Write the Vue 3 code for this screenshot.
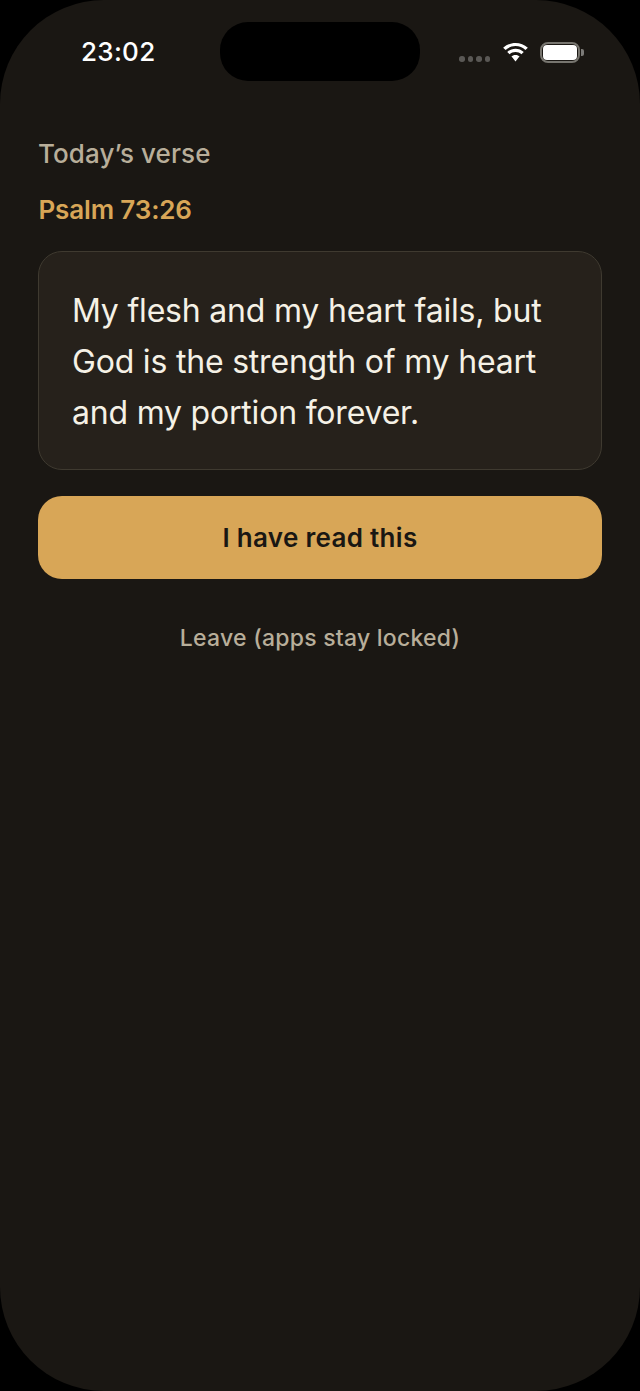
<template>
  <div class="screen">
    <div class="status">
      <span class="time">23:02</span>
      <div class="island"></div>
      <div class="indicators">
        <div class="dots">
          <i v-for="n in 4" :key="n"></i>
        </div>
        <svg class="wifi" width="27" height="19" viewBox="0 0 28 20">
          <path d="M14 3.2c4 0 7.700 1.600 10.400 4.200l2.600-2.400C23.400 1.900 18.900 0 14 0S4.600 1.900 1 5l2.600 2.400C6.300 4.800 10 3.200 14 3.200z" fill="#fff" />
          <path d="M14 9.500c2.400 0 4.600.9 6.200 2.400l2.500-2.400C20.400 7.400 17.300 6.100 14 6.100S7.600 7.400 5.300 9.500l2.500 2.400c1.600-1.500 3.800-2.400 6.200-2.400z" fill="#fff" />
          <path d="M14 12.500c-2 0-3.300.7-4.300 1.500L14 19.500l4.300-5.500c-1-.8-2.300-1.500-4.300-1.500z" fill="#fff" />
        </svg>
        <div class="battery">
          <div class="battery-body"><div class="battery-fill"></div></div>
          <div class="battery-cap"></div>
        </div>
      </div>
    </div>

    <main class="content">
      <p class="label">Today’s verse</p>
      <p class="reference">Psalm 73:26</p>
      <div class="verse-card">
        <p class="verse">My flesh and my heart fails, but God is the strength of my heart and my portion forever.</p>
      </div>
      <button class="read-btn">I have read this</button>
      <button class="leave-btn">Leave (apps stay locked)</button>
    </main>
  </div>
</template>

<script setup>
</script>

<style>
html,
body {
  margin: 0;
  background: #000;
}
</style>

<style scoped>
.screen {
  width: 640px;
  height: 1391px;
  box-sizing: border-box;
  background: #1a1713;
  border-radius: 104px;
  font-family: Inter, "Liberation Sans", sans-serif;
  overflow: hidden;
}
.status {
  height: 81px;
  padding-top: 22px;
  box-sizing: border-box;
  display: flex;
  justify-content: space-between;
  align-items: flex-start;
  padding-left: 81px;
  padding-right: 56px;
  position: relative;
}
.time {
  color: #fff;
  font-size: 26px;
  font-weight: 500;
  line-height: 32px;
  letter-spacing: 0.3px;
  margin-top: 14px;
}
.island {
  position: absolute;
  left: 220px;
  top: 22px;
  width: 200px;
  height: 59px;
  border-radius: 28px;
  background: #000;
}
.indicators {
  display: flex;
  align-items: center;
  margin-top: 20px;
}
.dots {
  display: flex;
  gap: 3px;
  margin-top: 13px;
  margin-right: 12px;
}
.dots i {
  width: 5.500px;
  height: 5.500px;
  border-radius: 50%;
  background: #5a5855;
}
.wifi {
  margin-right: 11px;
}
.battery {
  display: flex;
  align-items: center;
  gap: 1px;
}
.battery-body {
  width: 40px;
  height: 21px;
  box-sizing: border-box;
  border: 2px solid #77756f;
  border-radius: 8px;
  padding: 1px;
}
.battery-fill {
  height: 100%;
  background: #fff;
  border-radius: 4px;
}
.battery-cap {
  width: 3px;
  height: 7px;
  background: #7c7b78;
  border-radius: 0 2px 2px 0;
}
.content {
  padding: 0 38px;
  display: flex;
  flex-direction: column;
}
.label {
  margin: 55px 0 0;
  color: #b8ae9a;
  font-size: 26px;
  font-weight: 500;
  line-height: 36px;
  letter-spacing: 0.1px;
}
.reference {
  margin: 20px 0 0 0.500px;
  color: #d8a657;
  font-size: 26px;
  font-weight: 600;
  line-height: 36px;
  letter-spacing: -0.15px;
}
.verse-card {
  margin-top: 23px;
  padding: 33px 33px 31px;
  background: #26211b;
  border: 1px solid #3f3a30;
  border-radius: 24px;
}
.verse {
  margin: 0;
  color: #f5f1e6;
  font-size: 32px;
  line-height: 51px;
  letter-spacing: -0.2px;
}
.read-btn {
  margin-top: 26px;
  height: 83px;
  border: none;
  border-radius: 24px;
  background: #d8a657;
  color: #1a1713;
  font-family: inherit;
  font-size: 26px;
  font-weight: 600;
  letter-spacing: 0.3px;
}
.leave-btn {
  margin-top: 42px;
  padding: 0;
  border: none;
  background: none;
  color: #b8ae9a;
  font-family: inherit;
  font-size: 23px;
  font-weight: 500;
  line-height: 34px;
  letter-spacing: 0.25px;
}
</style>
